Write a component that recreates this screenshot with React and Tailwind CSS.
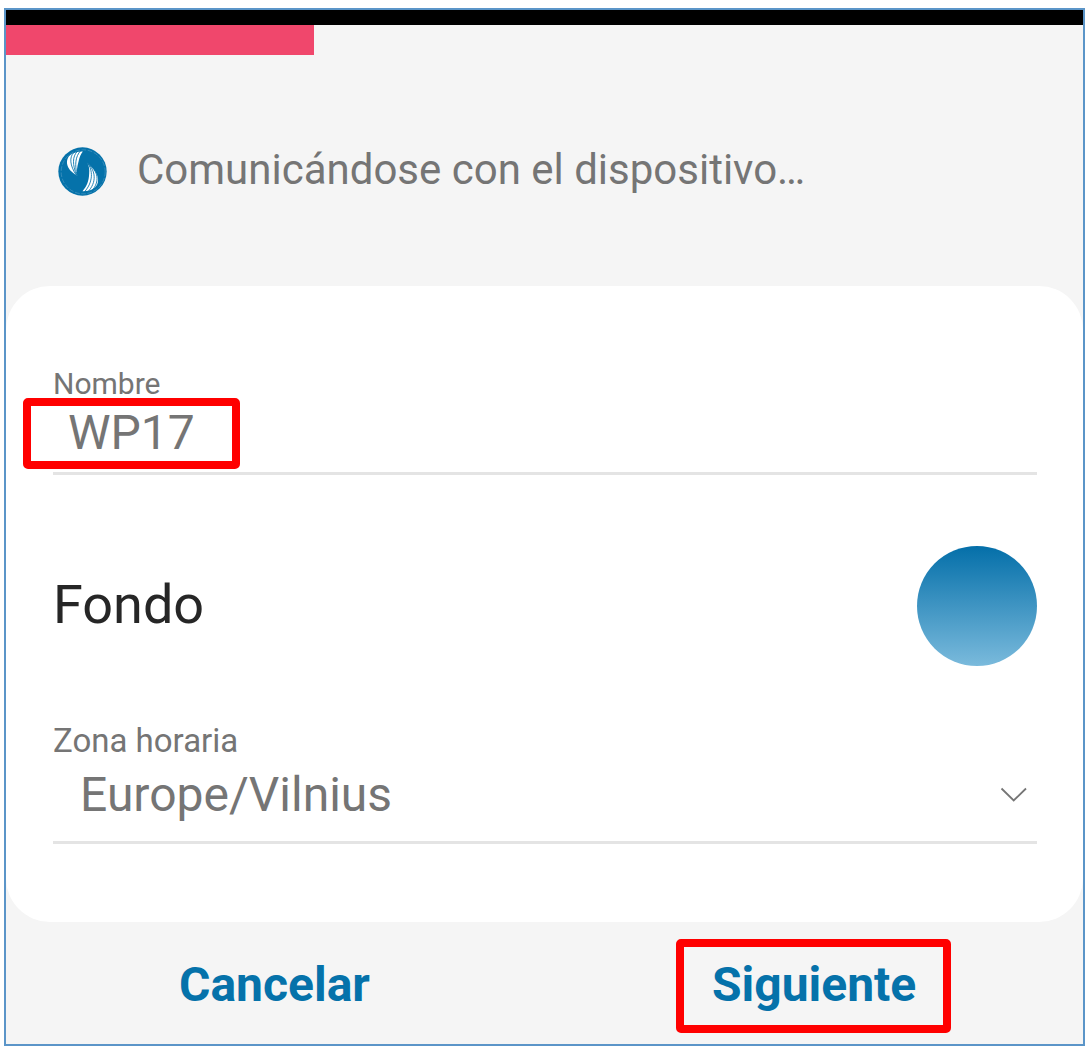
import React from "react";

function Logo() {
  return (
    <svg className="mt-[12px] h-[49px] w-[49px] shrink-0" viewBox="39.5 35.5 147 147" fill="none">
      <circle cx="113" cy="109" r="72.5" fill="#0572aa" />
      <circle cx="115" cy="110" r="66" stroke="#7db4d3" strokeWidth="1.5" strokeDasharray="14 5" opacity="0.75" />
      <path
        d="M82 56C66 64 63 82 70 96C76 108 86 114 97 122C95 108 97 94 101 80C104 66 108 56 114 49C102 48 91 51 82 56Z"
        fill="#fff"
      />
      <path
        d="M127 83C133 93 134 104 133 116C132 138 126 154 113 168C133 169 150 162 157 148C165 131 157 107 127 83Z"
        fill="#fff"
      />
      <g stroke="#0572aa" strokeWidth="2.6">
        <path d="M86 53C74 66 74 90 95 121" />
        <path d="M97 49C83 64 82 88 96 121" />
        <path d="M107 47C92 64 89 88 97 121" />
        <path d="M128 84C144 104 146 140 119 170" />
        <path d="M128 84C153 106 156 142 129 170" />
        <path d="M128 84C162 108 165 140 141 167" />
      </g>
    </svg>
  );
}

export default function App() {
  return (
    <div className="h-[1053px] w-[1090px] bg-white pl-[4px] pt-[8px] font-['Roboto',sans-serif]">
      <main className="relative flex h-[1038px] w-[1081px] flex-col border-2 border-[#5b95c8] bg-[#f5f5f5]">
        <div className="h-[15px] shrink-0 bg-black" />
        <div className="h-[30px] w-[308px] shrink-0 bg-[#f0476c]" />

        <header className="flex h-[231px] shrink-0 items-start pl-[52px] pt-[80px]">
          <Logo />
          <h1 className="ml-[30px] mt-[14px] whitespace-nowrap text-[42px] leading-none text-[#757575]">
            Comunicándose con el dispositivo…
          </h1>
        </header>

        <section className="h-[636px] shrink-0 rounded-[44px] bg-white pl-[47px] pr-[46px] pt-[83px]">
          <div className="border-b-[3px] border-[#e4e4e4] pb-[15px] text-[#757575]">
            <div className="text-[30px] leading-none">Nombre</div>
            <div className="mt-[10px] pl-[15px] text-[48px] leading-none">WP17</div>
          </div>

          <div className="mt-[71px] flex h-[120px] items-center justify-between">
            <div className="pb-[2px] text-[54px] leading-none text-[#262626]">Fondo</div>
            <div className="h-[120px] w-[120px] rounded-full bg-linear-to-b/srgb from-[#046fa9] to-[#7abadc]" />
          </div>

          <div className="mt-[58px] border-b-[3px] border-[#e4e4e4] pb-[22px] text-[#757575]">
            <div className="text-[33px] leading-none">Zona horaria</div>
            <div className="mt-[14px] flex items-center justify-between pl-[27px] pr-[9px]">
              <span className="text-[48px] leading-none">Europe/Vilnius</span>
              <svg className="h-[16px] w-[28px]" viewBox="0 0 28 16" fill="none" stroke="#757575" strokeWidth="1.8">
                <path d="M1.5 1.5L13.7 13.5L26 1.5" />
              </svg>
            </div>
          </div>
        </section>

        <footer className="flex grow items-start pl-[173px] pt-[39px] text-[48px] font-bold leading-none text-[#0572aa]">
          <button className="w-[533px] text-left">Cancelar</button>
          <button>Siguiente</button>
        </footer>

        <div className="absolute left-[16.5px] top-[388px] h-[70.5px] w-[217px] rounded-[5px] border-8 border-[#ff0000]" />
        <div className="absolute left-[670px] top-[929px] h-[94px] w-[275px] rounded-[5px] border-8 border-[#ff0000]" />
      </main>
    </div>
  );
}
